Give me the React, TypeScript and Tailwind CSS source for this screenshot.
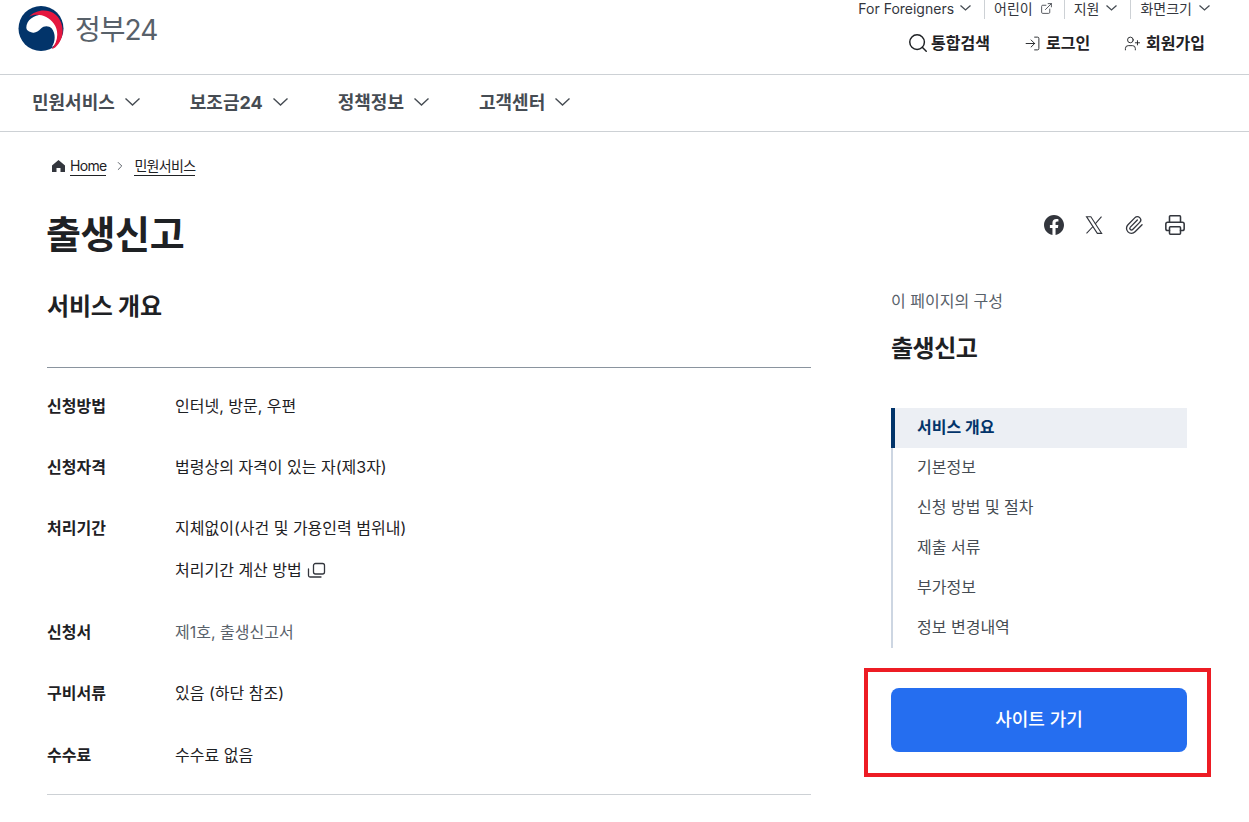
import { ChevronRight, Search, LogIn, UserPlus, ExternalLink, Paperclip, Printer } from 'lucide-react';

const font = '[font-family:Inter,"Noto_Sans_CJK_KR",sans-serif]';

const rows = [
  { label: '신청방법', lines: ['인터넷, 방문, 우편'] },
  { label: '신청자격', lines: ['법령상의 자격이 있는 자(제3자)'] },
  { label: '처리기간', lines: ['지체없이(사건 및 가용인력 범위내)', '처리기간 계산 방법'] },
  { label: '신청서', lines: ['제1호, 출생신고서'], muted: true },
  { label: '구비서류', lines: ['있음 (하단 참조)'] },
  { label: '수수료', lines: ['수수료 없음'] },
];

const toc = ['기본정보', '신청 방법 및 절차', '제출 서류', '부가정보', '정보 변경내역'];

function Logo() {
  return (
    <svg width="46" height="45" viewBox="0 0 46 46">
      <circle cx="23" cy="23" r="23" fill="#02346a" />
      <path d="M8 22C8 14 17 8 26 9c9 1 16 9 16 18 0 6-3 12-8 15 4-6 4-14 0-19-3-3-8-3-11 0-3 3-6 5-9 4-3-.5-6-2-6-5Z" fill="#fff" />
      <path d="M11 11C17 4 30 2 38 9c9 8 10 24 0 33-1 1-3 2-4 2 6-7 8-18 2-26C30 9 18 7 11 11Z" fill="#e5173f" />
    </svg>
  );
}

function Chev({ w, h, stroke = 1.3 }: { w: number; h: number; stroke?: number }) {
  return (
    <svg width={w} height={h} viewBox={`0 0 ${w} ${h}`} fill="none" stroke="#464c53" strokeWidth={stroke}>
      <path d={`M0.5 0.5 ${w / 2} ${h - 1} ${w - 0.5} 0.5`} />
    </svg>
  );
}

function HomeGlyph() {
  return (
    <svg width="13" height="12" viewBox="0 0 13 12" fill="#33363d">
      <path d="M6.500 0 13 5.500V12H8.500V8h-4v4H0V5.500L6.500 0Z" />
    </svg>
  );
}

function CopyIcon() {
  return (
    <svg width="19" height="18" viewBox="0 0 19 18" fill="none" stroke="#33363d" strokeWidth="1.300" strokeLinecap="round">
      <rect x="6.500" y="2.500" width="11" height="10.500" rx="2" />
      <path d="M1.500 8v6.500a1.500 1.500 0 0 0 1.500 1.500H14" />
    </svg>
  );
}

function Facebook() {
  return (
    <svg width="20" height="20" viewBox="0 0 24 24" fill="#33363d">
      <path d="M24 12.070C24 5.400 18.630 0 12 0S0 5.400 0 12.070c0 6.030 4.390 11.030 10.130 11.930v-8.440H7.080v-3.490h3.050V9.410c0-3.020 1.790-4.690 4.530-4.690 1.310 0 2.680.24 2.680.24v2.970h-1.510c-1.490 0-1.960.93-1.960 1.880v2.260h3.330l-.53 3.490h-2.800V24C19.610 23.100 24 18.100 24 12.070Z" />
    </svg>
  );
}

function XLogo() {
  return (
    <svg width="20" height="20" viewBox="0 0 24 24" fill="none" stroke="#33363d" strokeWidth="1.300">
      <path d="M3 2h5.200l13 20h-5.200L3 2Z" />
      <path d="M21 2l-7.800 9M10.800 13.800 3 22" />
    </svg>
  );
}

export default function App() {
  return (
    <div className={`${font} h-[822px] overflow-hidden bg-white text-[#1e2124]`}>
      <header className="h-[75px] border-b border-[#cdd1d5] flex justify-between pl-[18px] pr-[39px]">
        <a className="flex items-start pt-[6px] gap-[11px]">
          <Logo />
          <span className="text-[28px] leading-[46px] tracking-[-1px] text-[#58616a] font-normal mt-[1px]">정부24</span>
        </a>
        <div className="flex flex-col items-end">
          <ul className="flex items-center h-[16px] text-[14px] text-[#33363d]">
            <li className="flex items-center gap-[6px] pr-[13px]">For Foreigners <Chev w={11} h={6} /></li>
            <li className="flex items-center gap-[7px] pl-[9px] pr-[11px] border-l border-[#cdd1d5]">어린이 <ExternalLink size={13} strokeWidth={1.500} /></li>
            <li className="flex items-center gap-[7px] pl-[9px] pr-[13px] border-l border-[#cdd1d5]">지원 <Chev w={11} h={6} /></li>
            <li className="flex items-center gap-[7px] pl-[9px] border-l border-[#cdd1d5]">화면크기 <Chev w={11} h={6} /></li>
          </ul>
          <div className="flex items-center gap-[34px] mt-[15px] text-[16px] font-bold pr-[5px]">
            <span className="flex items-center gap-[2px]"><Search size={22} strokeWidth={1.600} />통합검색</span>
            <span className="flex items-center gap-[5px]"><LogIn size={17} strokeWidth={1.300} />로그인</span>
            <span className="flex items-center gap-[5px]"><UserPlus size={17} strokeWidth={1.300} />회원가입</span>
          </div>
        </div>
      </header>

      <nav className="h-[57px] pb-[2px] border-b border-[#cdd1d5] flex items-center pl-[32px] gap-[50px] text-[18px] font-bold text-[#464c53]">
        {['민원서비스', '보조금24', '정책정보', '고객센터'].map((item) => (
          <span key={item} className="flex items-center gap-[10px]">
            {item}
            <Chev w={15} h={8} stroke={1.4} />
          </span>
        ))}
      </nav>

      <main className="flex justify-between pl-[47px] pr-[62px]">
        <div className="w-[764px]">
          <div className="flex items-center pl-[5px] h-[24px] mt-[22px] text-[14px] tracking-[-0.7px]">
            <span className="mr-[5px]"><HomeGlyph /></span>
            <span className="border-b border-[#1e2124] leading-[19px]">Home</span>
            <ChevronRight size={14} strokeWidth={1.500} className="mx-[7px] text-[#464c53]" />
            <span className="border-b border-[#1e2124] leading-[19px]">민원서비스</span>
          </div>
          <h1 className="text-[38px] leading-[52px] font-bold mt-[30px] -ml-[1px] tracking-[-0.4px]">출생신고</h1>
          <h2 className="text-[24px] leading-[36px] font-bold mt-[29px] tracking-[-0.2px]">서비스 개요</h2>
          <dl className="mt-[42px] border-t border-b border-b-[#cdd1d5] border-t-[#8a949e] pt-[26px] pb-[16px] flex flex-col gap-[26px]">
            {rows.map((row) => (
              <div key={row.label} className={`flex text-[16px] leading-[24px] min-h-[35px] last:mt-[1px] ${row.lines.length > 1 ? 'pb-[12px]' : ''}`}>
                <dt className="w-[128px] font-bold shrink-0">{row.label}</dt>
                <dd className={`flex flex-col gap-[18px] ${row.muted ? 'text-[#58616a]' : ''}`}>
                  {row.lines.map((line) => (
                    <span key={line} className="flex items-center gap-[5px]">
                      {line}
                      {line === '처리기간 계산 방법' && <CopyIcon />}
                    </span>
                  ))}
                </dd>
              </div>
            ))}
          </dl>
        </div>

        <aside className="w-[296px]">
          <div className="flex items-center justify-end gap-[20px] h-[24px] mt-[81px] pr-[1px]">
            <Facebook />
            <XLogo />
            <Paperclip size={20} strokeWidth={1.600} className="text-[#33363d]" />
            <Printer size={22} strokeWidth={1.700} className="text-[#33363d]" />
          </div>
          <p className="text-[16px] leading-[24px] text-[#58616a] mt-[52px]">이 페이지의 구성</p>
          <p className="text-[24px] leading-[36px] font-bold mt-[18px] tracking-[-0.5px]">출생신고</p>
          <ul className="mt-[41px] border-l-2 border-[#cdd6e2] text-[16px] text-[#464c53]">
            <li className="h-[40px] pb-[2px] flex items-center -ml-[2px] pl-[22px] border-l-4 border-[#02346a] bg-[#eceff4] font-bold text-[#02346a]">서비스 개요</li>
            {toc.map((item) => (
              <li key={item} className="h-[40px] pb-[2px] flex items-center pl-[24px]">{item}</li>
            ))}
          </ul>
          <div className="-ml-[27px] -mr-[24px] mt-[20px] border-4 border-[#ed1c24] pl-[23px] pr-[20px] pt-[16px] pb-[21px]">
            <button className="w-full h-[64px] pb-[2px] rounded-[8px] bg-[#256ef0] text-white text-[18px] font-medium">사이트 가기</button>
          </div>
        </aside>
      </main>
    </div>
  );
}
